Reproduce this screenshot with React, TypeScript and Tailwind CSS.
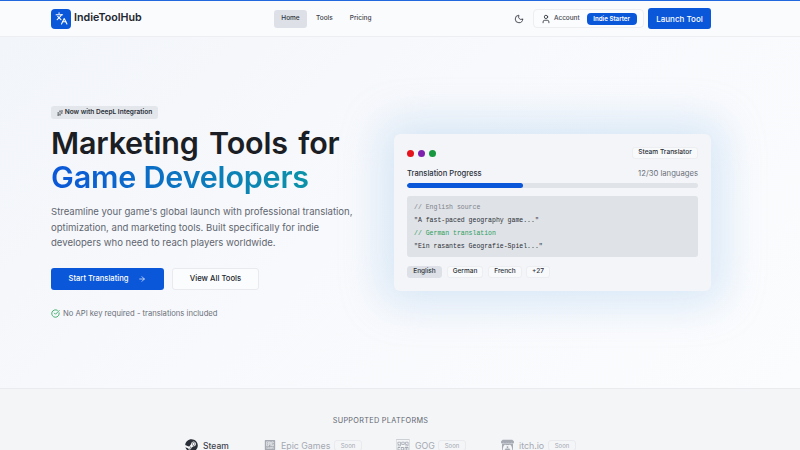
import { Languages, Moon, User, ArrowRight, CircleCheckBig, Sparkles } from "lucide-react";
import { FaSteam } from "react-icons/fa";
import { SiEpicgames, SiGogdotcom, SiItchdotio } from "react-icons/si";

function Chip({ children, active, w }: { children: string; active?: boolean; w: string }) {
  return (
    <span className={`h-[12px] flex items-center justify-center rounded-[3px] text-[6.5px] font-medium text-[#2b3038] border ${w} ${active ? "bg-[#dde1e7] border-[#dde1e7]" : "bg-[#f8f9fb] border-[#eceef2]"}`}>
      {children}
    </span>
  );
}

function Soon() {
  return <span className="h-[11px] w-[28px] flex items-center justify-center rounded-[3px] border border-[#e8eaee] text-[6px] text-[#a4a9b2]">Soon</span>;
}

export default function App() {
  return (
    <div className="w-full h-[450px] overflow-hidden flex flex-col bg-[#f4f5f7] text-[#1a1d23]" style={{ fontFamily: "Inter, 'Liberation Sans', sans-serif" }}>
      <header className="h-[37px] shrink-0 bg-[#fafbfd] border-t border-t-[#2168de] border-b border-b-[#eceef2] flex items-center">
        <div className="w-[711px] pl-[51px] flex items-center shrink-0">
          <div className="w-[20px] h-[20px] rounded-[4px] bg-[#0b57d9] flex items-center justify-center text-white">
            <Languages size={13} strokeWidth={2} />
          </div>
          <span className="ml-[3px] text-[10.7px] font-semibold text-[#22262d] w-[200px]">IndieToolHub</span>
          <nav className="flex items-center text-[6.5px] font-medium text-[#3e434c]">
            <span className="h-[18px] w-[33px] rounded-[3px] bg-[#dde1e7] flex items-center justify-center text-[#30353d]">Home</span>
            <span className="ml-[9px]">Tools</span>
            <span className="ml-[17px]">Pricing</span>
          </nav>
          <div className="ml-auto flex items-center">
            <Moon size={10} strokeWidth={2} className="text-[#2b3038]" />
            <div className="ml-[9px] w-[111px] h-[19px] rounded-[4px] border border-[#eceef2] bg-[#fbfcfd] flex items-center pl-[7px]">
              <User size={10} strokeWidth={2} className="text-[#2b3038]" />
              <span className="ml-[3px] text-[6.4px] font-medium text-[#3e434c]">Account</span>
              <span className="ml-[7px] w-[50px] h-[12px] rounded-[4px] bg-[#0b57d9] text-white text-[6.2px] font-semibold flex items-center justify-center">Indie Starter</span>
            </div>
            <button className="ml-[4px] w-[63px] h-[21px] rounded-[3px] bg-[#0b57d9] text-white text-[8px] font-medium">Launch Tool</button>
          </div>
        </div>
      </header>

      <main className="h-[352px] shrink-0 bg-[linear-gradient(135deg,#f2f5fa_0%,#f8f9fc_45%,#fbfcfe_100%)] border-b border-b-[#e9ebef] overflow-hidden">
        <div className="w-[711px] pl-[51px] h-full flex items-start justify-between">
          <section className="pt-[69px] w-[320px]">
            <span className="flex items-center gap-[2px] h-[13px] w-[107px] justify-center rounded-[3px] bg-[#e3e6eb] text-[6.55px] font-semibold text-[#2b3038]">
              <Sparkles size={6} strokeWidth={2} />Now with DeepL Integration
            </span>
            <h1 className="mt-[7px] text-[30.5px] leading-[34px] font-semibold tracking-[-0.2px] text-[#1b1e24] whitespace-nowrap">
              <span className="[word-spacing:3px]">Marketing Tools for</span>
              <br />
              <span className="bg-[linear-gradient(90deg,#0b57d9,#0b93a8)] bg-clip-text text-transparent">Game Developers</span>
            </h1>
            <p className="mt-[10px] text-[9.55px] leading-[15.5px] text-[#5f6670] whitespace-nowrap">
              Streamline your game's global launch with professional translation,
              <br />
              optimization, and marketing tools. Built specifically for indie
              <br />
              developers who need to reach players worldwide.
            </p>
            <div className="mt-[17px] flex items-center gap-[8px]">
              <button className="w-[113px] h-[22px] rounded-[3px] bg-[#0b57d9] text-white text-[7.6px] font-medium flex items-center justify-center gap-[10px]">
                Start Translating <ArrowRight size={8} strokeWidth={2} />
              </button>
              <button className="w-[87px] h-[22px] rounded-[3px] bg-[#fbfcfd] border border-[#e8eaee] text-[7.7px] font-medium text-[#22262d]">View All Tools</button>
            </div>
            <div className="mt-[18px] flex items-center gap-[3px] text-[7.65px] text-[#6b7079]">
              <CircleCheckBig size={9} strokeWidth={2.2} className="text-[#27a35a]" />
              No API key required - translations included
            </div>
          </section>

          <section className="mt-[97px] w-[317px] h-[157px] rounded-[6px] bg-[#f3f5f8] px-[13px] pt-[13px] shadow-[0_0_40px_12px_rgba(150,195,235,0.35)]">
            <div className="flex items-center justify-between">
              <div className="flex items-center gap-[4px]">
                <span className="w-[7px] h-[7px] rounded-full bg-[#e5131c]" />
                <span className="w-[7px] h-[7px] rounded-full bg-[#7e22ae]" />
                <span className="w-[7px] h-[7px] rounded-full bg-[#17973f]" />
              </div>
              <span className="w-[66px] h-[12px] rounded-[3px] bg-[#f8f9fb] border border-[#eceef2] flex items-center justify-center text-[6.6px] font-medium text-[#2b3038]">Steam Translator</span>
            </div>
            <div className="mt-[9px] flex items-center justify-between leading-[12px]">
              <span className="text-[7.6px] font-medium text-[#2b3038]">Translation Progress</span>
              <span className="text-[7.7px] text-[#6b7079]">12/30 languages</span>
            </div>
            <div className="mt-[3px] h-[4.5px] rounded-full bg-[#e0e3e8] overflow-hidden">
              <div className="h-full w-[40%] rounded-full bg-[#0b57d9]" />
            </div>
            <div className="mt-[8px] h-[61px] rounded-[3px] bg-[#dfe2e6] px-[7px] py-[5px] text-[6.5px] leading-[13px] whitespace-nowrap" style={{ fontFamily: "'Liberation Mono', monospace" }}>
              <div className="text-[#7d838c]">// English source</div>
              <div className="text-[#2b3038]">"A fast-paced geography game..."</div>
              <div className="text-[#2f9e5f]">// German translation</div>
              <div className="text-[#2b3038]">"Ein rasantes Geografie-Spiel..."</div>
            </div>
            <div className="mt-[9px] flex items-center">
              <Chip active w="w-[35px]">English</Chip>
              <Chip w="w-[36px] ml-[5px]">German</Chip>
              <Chip w="w-[34px] ml-[5px]">French</Chip>
              <Chip w="w-[24px] ml-[4px]">+27</Chip>
            </div>
          </section>
        </div>
      </main>

      <footer className="flex-1 flex flex-col items-start pt-[27px]">
        <div className="w-[761px] flex flex-col items-center">
          <div className="text-[7.3px] tracking-[0.3px] text-[#5f6670]">SUPPORTED PLATFORMS</div>
          <div className="mt-[12px] w-[761px] pl-[185px] flex items-center text-[8.8px] whitespace-nowrap">
            <FaSteam size={13} className="text-[#2b3038]" />
            <span className="ml-[5px] text-[8.5px] font-medium text-[#3e434c] w-[61px]">Steam</span>
            <SiEpicgames size={12} className="text-[#a4a9b2]" />
            <span className="ml-[5px] text-[#a4a9b2] w-[53px]">Epic Games</span>
            <Soon />
            <SiGogdotcom size={14} className="ml-[34px] text-[#a4a9b2]" />
            <span className="ml-[5px] text-[#a4a9b2] w-[23px]">GOG</span>
            <Soon />
            <SiItchdotio size={13} className="ml-[35px] text-[#a4a9b2]" />
            <span className="ml-[5px] text-[#a4a9b2] w-[29px]">itch.io</span>
            <Soon />
          </div>
        </div>
      </footer>
    </div>
  );
}
